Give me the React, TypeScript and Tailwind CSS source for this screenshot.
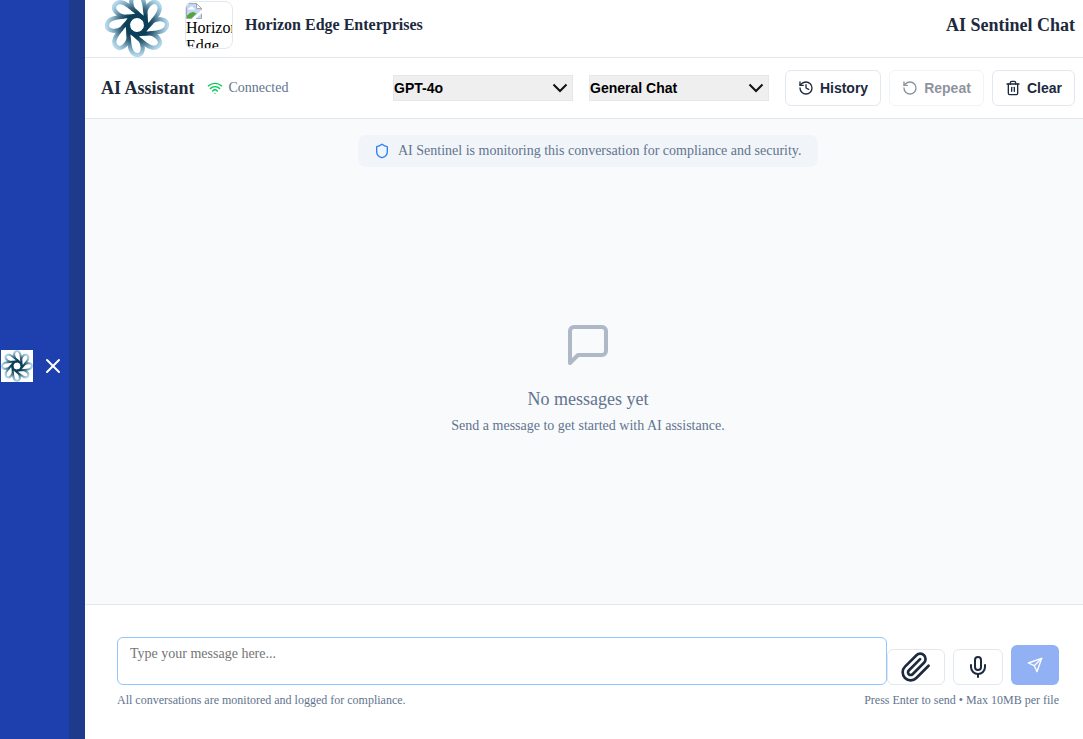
import React from "react";
import { History, RotateCcw, Trash2, Shield, Mic, Wifi, X } from "lucide-react";

const PETALS = [0, 45, 90, 135, 180, 225, 270, 315];

function Logo({ id, className }: { id: string; className: string }) {
  return (
    <svg viewBox="-32 -32 64 64" className={className} fill="none">
      <defs>
        <radialGradient id={id} gradientUnits="userSpaceOnUse" cx="0" cy="0" r="32">
          <stop offset="0.38" stopColor="#0b3f5a" />
          <stop offset="0.55" stopColor="#35647c" />
          <stop offset="0.75" stopColor="#7da8be" />
          <stop offset="0.95" stopColor="#b3d8ea" />
        </radialGradient>
      </defs>
      {PETALS.map((a) => (
        <path
          key={a}
          d="M0 9C8 9 14 8.500 20 7.500C26 6.500 30 4 30-.5C30-6 22-7.500 15-3.500"
          stroke={`url(#${id})`}
          strokeWidth="4.200"
          transform={`rotate(${a})`}
        />
      ))}
      <circle r="9.300" stroke="#0b3f5a" strokeWidth="4.600" />
    </svg>
  );
}

function LineIcon({ size, className, children }: { size: number; className?: string; children: React.ReactNode }) {
  return (
    <svg
      width={size}
      height={size}
      viewBox="0 0 24 24"
      fill="none"
      stroke="currentColor"
      strokeWidth="2"
      strokeLinecap="round"
      strokeLinejoin="round"
      className={className}
    >
      {children}
    </svg>
  );
}

function BrokenImage() {
  return (
    <svg width="16" height="16" viewBox="0 0 16 16" className="shrink-0">
      <path d="M.5.5h10l5 5v10H.5z" fill="#c3d6f6" stroke="#a8a8a8" />
      <path d="M10.500.5v5h5z" fill="#fff" stroke="#a8a8a8" />
      <path d="M2 6.500Q2 4.500 4 4.500q2-2 3.500.5 1.500 0 1.500 1.500z" fill="#fff" />
      <path d="M1 15v-2.500Q6 6.500 10.500 10.500L6 15z" fill="#55a63a" />
      <path d="M5.500 16 16 6.500V10l-6.500 6z" fill="#fff" />
    </svg>
  );
}

function Select({ label }: { label: string }) {
  return (
    <div className="flex h-[26px] w-[180px] items-center justify-between border border-slate-200 bg-[#efefef] pr-[4px] font-['Liberation_Sans',sans-serif] text-sm font-bold text-black">
      <span>{label}</span>
      <svg width="16" height="16" viewBox="0 0 16 16" fill="none" stroke="#111" strokeWidth="2">
        <path d="m1.500 4.500 6.500 6.500 6.500-6.500" />
      </svg>
    </div>
  );
}

function ToolButton({ icon, label, width, disabled }: { icon: React.ReactNode; label: string; width: string; disabled?: boolean }) {
  return (
    <button
      disabled={disabled}
      className={`flex h-9 items-center justify-center gap-1.5 rounded-md border border-slate-200 bg-white font-['Liberation_Sans',sans-serif] text-sm font-bold text-slate-800 disabled:opacity-50 ${width}`}
    >
      {icon}
      {label}
    </button>
  );
}

export default function App() {
  return (
    <div className="flex h-[739px] w-[1083px] overflow-hidden bg-slate-50 font-['Liberation_Serif',serif]">
      <aside className="flex w-[85px] shrink-0 items-center border-r-[16px] border-[#1e3a8a] bg-[#1e40af] pl-px">
        <div className="mt-[-7px] flex items-center gap-2">
          <div className="size-8 bg-white">
            <Logo id="logo-small" className="size-8" />
          </div>
          <X size={24} className="text-white" />
        </div>
      </aside>

      <main className="flex min-w-0 flex-1 flex-col">
        <header className="flex h-[58px] shrink-0 items-center justify-between border-b border-slate-200 bg-white pr-2 pb-[7px] pl-5">
          <div className="flex items-center">
            <Logo id="logo-main" className="size-16 shrink-0" />
            <div className="ml-4 size-12 overflow-hidden rounded-lg border border-slate-200 pt-px text-base leading-[18px] text-black">
              <div className="flex h-4">
                <BrokenImage />
              </div>
              <div>Horizon</div>
              <div>Edge</div>
            </div>
            <h2 className="ml-3 text-base font-bold text-slate-800">Horizon Edge Enterprises</h2>
          </div>
          <h1 className="text-lg font-bold text-slate-800">AI Sentinel Chat</h1>
        </header>

        <div className="flex h-[61px] shrink-0 items-center border-b border-slate-200 bg-white pr-2 pl-4">
          <h3 className="text-lg font-bold text-gray-800">AI Assistant</h3>
          <Wifi size={16} className="ml-3 text-green-500" />
          <span className="ml-1.5 text-sm text-slate-500">Connected</span>
          <div className="ml-auto flex items-center">
            <div className="mr-4 flex gap-4">
              <Select label="GPT-4o" />
              <Select label="General Chat" />
            </div>
            <div className="flex gap-2">
              <ToolButton icon={<History size={16} />} label="History" width="w-24" />
              <ToolButton icon={<RotateCcw size={16} />} label="Repeat" width="w-[95px]" disabled />
              <ToolButton icon={<Trash2 size={16} />} label="Clear" width="w-[83px]" />
            </div>
          </div>
        </div>

        <section className="flex flex-1 flex-col items-center pt-4 pl-2">
          <div className="flex h-8 w-[460px] items-center rounded-lg bg-slate-100 pl-4 text-sm text-slate-500">
            <Shield size={16} className="mr-2 shrink-0 text-blue-500" />
            <span className="whitespace-nowrap">AI Sentinel is monitoring this conversation for compliance and security.</span>
          </div>
          <div className="mt-[154px] flex flex-col items-center text-slate-500">
            <LineIcon size={48} className="text-[#afb8c6]">
              <path d="M21 15a2 2 0 0 1-2 2H7l-4 4V5a2 2 0 0 1 2-2h14a2 2 0 0 1 2 2z" />
            </LineIcon>
            <p className="mt-4 text-lg">No messages yet</p>
            <p className="mt-[3px] text-sm">Send a message to get started with AI assistance.</p>
          </div>
        </section>

        <footer className="h-[135px] shrink-0 border-t border-slate-200 bg-white pt-8 pr-6 pl-8">
          <div className="flex items-end">
            <textarea
              placeholder="Type your message here..."
              className="h-12 w-[770px] resize-none rounded-md border border-[#93c5fd] bg-white px-3 pt-1.5 text-sm placeholder:text-[#757575] focus:outline-none"
            />
            <button className="flex h-9 w-[58px] items-center justify-center rounded-md border border-slate-200 bg-white text-slate-800">
              <LineIcon size={32}>
                <path d="m21.440 11.050-9.190 9.190a6 6 0 0 1-8.490-8.490l8.570-8.570A4 4 0 1 1 18 8.840l-8.590 8.570a2 2 0 0 1-2.830-2.830l8.490-8.480" />
              </LineIcon>
            </button>
            <button className="ml-2 flex h-9 w-[50px] items-center justify-center rounded-md border border-slate-200 bg-white text-slate-800">
              <Mic size={24} />
            </button>
            <button className="ml-2 flex h-10 w-12 items-center justify-center rounded-md bg-[#92b1f5] text-white">
              <LineIcon size={16}>
                <path d="m22 2-7 20-4-9-9-4Z" />
                <path d="M22 2 11 13" />
              </LineIcon>
            </button>
          </div>
          <div className="mt-[7px] flex justify-between text-xs text-slate-500">
            <span>All conversations are monitored and logged for compliance.</span>
            <span>Press Enter to send • Max 10MB per file</span>
          </div>
        </footer>
      </main>
    </div>
  );
}
